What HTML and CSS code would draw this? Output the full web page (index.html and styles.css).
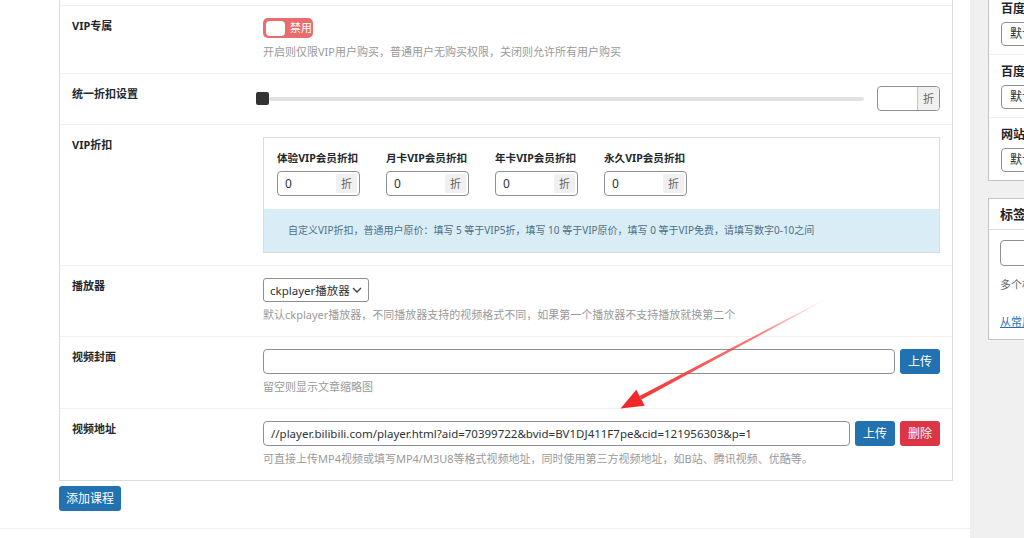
FILE: index.html
```html
<!DOCTYPE html>
<html>
<head>
	<meta charset="UTF-8">
	<title>添加课程</title>
	<link rel="stylesheet" href="styles.css">
</head>
<body>

<div class="screen">

	<div class="main">
		<div class="box">
			<div class="row row-cut"></div>

			<div class="row">
				<div class="label">VIP专属</div>
				<div class="field">
					<span class="toggle"><span class="toggle-knob"></span><span class="toggle-text">禁用</span></span>
					<p class="desc desc-toggle">开启则仅限VIP用户购买，普通用户无购买权限，关闭则允许所有用户购买</p>
				</div>
			</div>

			<div class="row row-range">
				<div class="label">统一折扣设置</div>
				<div class="field range-line">
					<div class="slider"><span class="slider-handle"></span><span class="slider-track"></span></div>
					<div class="addon-group">
						<span class="addon-input"></span>
						<span class="addon">折</span>
					</div>
				</div>
			</div>

			<div class="row">
				<div class="label">VIP折扣</div>
				<div class="field">
					<div class="vip-panel">
						<div class="vip-groups">
							<div class="vip-group">
								<div class="vip-title">体验VIP会员折扣</div>
								<div class="vip-input"><span class="vip-value">0</span><span class="vip-unit">折</span></div>
							</div>
							<div class="vip-group">
								<div class="vip-title">月卡VIP会员折扣</div>
								<div class="vip-input"><span class="vip-value">0</span><span class="vip-unit">折</span></div>
							</div>
							<div class="vip-group">
								<div class="vip-title">年卡VIP会员折扣</div>
								<div class="vip-input"><span class="vip-value">0</span><span class="vip-unit">折</span></div>
							</div>
							<div class="vip-group">
								<div class="vip-title">永久VIP会员折扣</div>
								<div class="vip-input"><span class="vip-value">0</span><span class="vip-unit">折</span></div>
							</div>
						</div>
						<div class="vip-note">自定义VIP折扣，普通用户原价：填写 5 等于VIP5折，填写 10 等于VIP原价，填写 0 等于VIP免费，请填写数字0-10之间</div>
					</div>
				</div>
			</div>

			<div class="row">
				<div class="label">播放器</div>
				<div class="field">
					<div class="select">
						<span>ckplayer播放器</span>
						<svg width="10" height="6" viewBox="0 0 10 6"><path d="M1 1l4 4 4-4" fill="none" stroke="#3c434a" stroke-width="1.4"/></svg>
					</div>
					<p class="desc">默认ckplayer播放器，不同播放器支持的视频格式不同，如果第一个播放器不支持播放就换第二个</p>
				</div>
			</div>

			<div class="row">
				<div class="label">视频封面</div>
				<div class="field">
					<div class="input-line">
						<div class="text-input"></div>
						<span class="btn btn-blue">上传</span>
					</div>
					<p class="desc">留空则显示文章缩略图</p>
				</div>
			</div>

			<div class="row">
				<div class="label">视频地址</div>
				<div class="field">
					<div class="input-line">
						<div class="text-input">//player.bilibili.com/player.html?aid=70399722&amp;bvid=BV1DJ411F7pe&amp;cid=121956303&amp;p=1</div>
						<span class="btn btn-blue">上传</span>
						<span class="btn btn-red">删除</span>
					</div>
					<p class="desc">可直接上传MP4视频或填写MP4/M3U8等格式视频地址，同时使用第三方视频地址，如B站、腾讯视频、优酷等。</p>
				</div>
			</div>
		</div>

		<div class="actions"><span class="btn btn-blue btn-submit">添加课程</span></div>

		<div class="main-foot"><span class="help">?</span></div>
	</div>

	<div class="gutter"></div>

	<div class="sidebar">
		<div class="side-box side-box-top">
			<div class="side-row">
				<div class="side-label">百度推送</div>
				<div class="side-select">默认推送</div>
			</div>
			<div class="side-row">
				<div class="side-label">百度收录</div>
				<div class="side-select">默认开启</div>
			</div>
			<div class="side-row">
				<div class="side-label">网站地图</div>
				<div class="side-select">默认开启</div>
			</div>
		</div>

		<div class="side-box side-box-tags">
			<div class="side-head">标签</div>
			<div class="side-body">
				<div class="side-input"></div>
				<p class="side-hint">多个标签请用英文逗号（,）分开</p>
				<a class="side-link" href="#">从常用标签中选择</a>
			</div>
		</div>
	</div>

	<svg class="annotation" width="1024" height="538" viewBox="0 0 1024 538">
		<defs>
			<linearGradient id="arrowfade" gradientUnits="userSpaceOnUse" x1="830" y1="297" x2="621" y2="408">
				<stop offset="0" stop-color="#ff5050" stop-opacity="0"/>
				<stop offset="0.35" stop-color="#ff3a3a" stop-opacity="0.7"/>
				<stop offset="1" stop-color="#f02a2a" stop-opacity="1"/>
			</linearGradient>
		</defs>
		<polygon points="830.1,297.3 829.9,296.7 639.6,395.9 641.4,399.5" fill="url(#arrowfade)"/>
		<polygon points="620.5,408.5 644.7,405.7 636.3,389.7" fill="#f02a2a"/>
	</svg>

</div>

</body>
</html>
```

FILE: styles.css
```css
*{
	box-sizing: border-box;
}
html, body{
	margin: 0;
	height: 100%;
}
body{
	font-family: "Noto Sans", "Noto Sans CJK SC", sans-serif;
	font-size: 11px;
	color: #3c434a;
	background-color: #f0f0f1;
	overflow: hidden;
}
p{
	margin: 0;
}

.screen{
	position: relative;
	display: flex;
	height: 538px;
}

/* main column */
.main{
	width: 970px;
	flex-shrink: 0;
	background-color: #fff;
}
.box{
	margin-left: 59px;
	width: 894px;
	border: 1px solid #dcdcde;
	border-top: 0;
}
.row{
	display: grid;
	grid-template-columns: 203px 1fr;
	padding: 12px 12px 12px 0;
	border-bottom: 1px solid #f0f0f1;
}
.row:last-child{
	border-bottom: 0;
}
.row-cut{
	height: 6px;
	padding: 0;
}
.row-range{
	padding-bottom: 13px;
}
.label{
	padding-left: 12px;
	line-height: 16px;
	font-weight: bold;
	color: #23282d;
}
.desc{
	margin-top: 4px;
	line-height: 18px;
	color: #9a9a9a;
}
.desc-toggle{
	margin-top: 5px;
}

/* toggle */
.toggle{
	display: flex;
	align-items: center;
	width: 50px;
	height: 20px;
	padding: 0 3px;
	border-radius: 5px;
	background-color: #e96d6d;
	white-space: nowrap;
}
.toggle-knob{
	flex-shrink: 0;
	width: 19px;
	height: 15px;
	border-radius: 4px;
	background-color: #fff;
}
.toggle-text{
	margin-left: 5px;
	color: #fff;
	line-height: 16px;
}

/* slider */
.range-line{
	display: flex;
	align-items: center;
	gap: 13px;
}
.slider{
	flex: 1;
	display: flex;
	align-items: center;
	margin-left: -7px;
}
.slider-handle{
	width: 13px;
	height: 13px;
	border-radius: 2px;
	background-color: #333;
}
.slider-track{
	flex: 1;
	height: 4px;
	border-radius: 2px;
	background-color: #e2e2e2;
}
.addon-group{
	display: flex;
	width: 63px;
	height: 25px;
	border: 1px solid #8c8f94;
	border-radius: 4px;
	overflow: hidden;
}
.addon-input{
	flex: 1;
}
.addon{
	width: 22px;
	line-height: 23px;
	text-align: center;
	color: #666;
	background-color: #f0f0f1;
	border-left: 1px solid #c3c4c7;
}

/* vip panel */
.vip-panel{
	border: 1px solid #dcdcde;
}
.vip-groups{
	display: flex;
	gap: 26px;
	padding: 12px 13px 13px;
}
.vip-group{
	width: 83px;
}
.vip-title{
	line-height: 16px;
	font-size: 10.6px;
	font-weight: bold;
	color: #23282d;
	white-space: nowrap;
	margin-bottom: 5px;
}
.vip-input{
	display: flex;
	align-items: center;
	height: 25px;
	padding: 0 2px 0 7px;
	border: 1px solid #8c8f94;
	border-radius: 4px;
	font-size: 12px;
	color: #2c3338;
}
.vip-value{
	flex: 1;
}
.vip-unit{
	width: 21px;
	height: 19px;
	line-height: 19px;
	text-align: center;
	font-size: 11px;
	color: #666;
	background-color: #f0f0f1;
	border-radius: 2px;
}
.vip-note{
	height: 43px;
	line-height: 43px;
	padding-left: 24px;
	font-size: 10px;
	color: #4f6f84;
	background-color: #d9edf7;
}

/* inputs and buttons */
.select{
	display: flex;
	align-items: center;
	justify-content: space-between;
	width: 106px;
	height: 24px;
	padding: 0 6px 0 6px;
	border: 1px solid #8c8f94;
	border-radius: 3px;
	font-size: 11.5px;
	color: #2c3338;
	white-space: nowrap;
}
.input-line{
	display: flex;
	gap: 4px;
}
.text-input{
	flex: 1;
	height: 25px;
	padding: 0 7px;
	line-height: 23px;
	border: 1px solid #8c8f94;
	border-radius: 4px;
	font-size: 11.5px;
	color: #2c3338;
	white-space: nowrap;
	overflow: hidden;
}
.input-line .btn{
	margin-left: 1px;
}
.btn{
	display: inline-block;
	height: 25px;
	padding: 0 8px;
	line-height: 25px;
	border-radius: 3px;
	font-size: 12px;
	color: #fff;
	white-space: nowrap;
}
.btn-blue{
	background-color: #2271b1;
}
.btn-red{
	background-color: #dc3545;
}
.actions{
	padding: 5px 0 0 59px;
}
.btn-submit{
	width: 62px;
	padding: 0;
	text-align: center;
}
.main-foot{
	margin-top: 17px;
	padding: 6px 3px 0 0;
	border-top: 1px solid #f0f0f1;
	text-align: right;
}
.help{
	display: inline-block;
	width: 13px;
	height: 13px;
	border: 1.5px solid #8c8f94;
	border-radius: 50%;
	font-size: 9px;
	line-height: 10px;
	text-align: center;
	font-weight: bold;
	color: #8c8f94;
}

/* sidebar */
.gutter{
	width: 18px;
	flex-shrink: 0;
}
.sidebar{
	width: 280px;
	flex-shrink: 0;
}
.side-box{
	background-color: #fff;
	border: 1px solid #c3c4c7;
}
.side-box-top{
	margin-top: -9px;
}
.side-row{
	padding: 9px 12px 8px;
	border-bottom: 1px solid #f0f0f1;
}
.side-row:last-child{
	border-bottom: 0;
}
.side-label{
	line-height: 16px;
	font-size: 12px;
	font-weight: bold;
	color: #1d2327;
}
.side-select{
	margin-top: 5px;
	width: 220px;
	height: 24px;
	padding: 0 8px;
	line-height: 22px;
	border: 1px solid #8c8f94;
	border-radius: 4px;
	font-size: 12px;
	color: #2c3338;
}
.side-box-tags{
	margin-top: 17px;
}
.side-head{
	padding: 7px 11px;
	line-height: 16px;
	font-size: 13px;
	font-weight: bold;
	color: #1d2327;
	border-bottom: 1px solid #dcdcde;
}
.side-body{
	padding: 10px 11px 8px;
}
.side-input{
	width: 200px;
	height: 26px;
	border: 1px solid #8c8f94;
	border-radius: 4px;
}
.side-hint{
	margin-top: 10px;
	line-height: 18px;
	color: #646970;
	white-space: nowrap;
}
.side-link{
	display: block;
	margin-top: 19px;
	line-height: 18px;
	color: #2271b1;
	white-space: nowrap;
}

/* screenshot annotation */
.annotation{
	position: absolute;
	top: 0;
	left: 0;
	pointer-events: none;
}
```
